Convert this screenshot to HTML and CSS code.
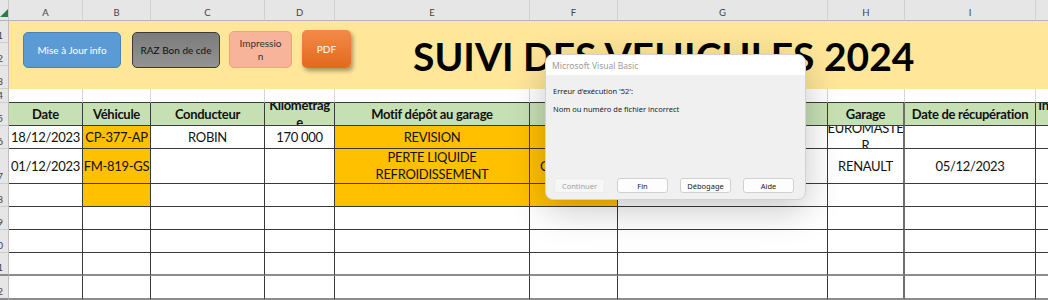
FILE: index.html
```html
<!DOCTYPE html>
<html lang="fr">
<head>
    <meta charset="UTF-8">
    <title>Suivi des véhicules 2024</title>
    <link rel="stylesheet" href="styles.css">
</head>
<body>
<div class="sheet">
    <!-- column letters -->
    <div class="corner"><svg class="tri" width="8" height="8" viewBox="0 0 8 8"><polygon points="8,0 8,8 0,8" fill="#2f7a4a"/></svg></div>
    <div class="col">A</div>
    <div class="col">B</div>
    <div class="col">C</div>
    <div class="col">D</div>
    <div class="col">E</div>
    <div class="col">F</div>
    <div class="col">G</div>
    <div class="col">H</div>
    <div class="col">I</div>
    <div class="col">J</div>

    <!-- rows 1-3 : banner -->
    <div class="rh">1</div>
    <div class="band">
        <div class="btn b-info">Mise à Jour info</div>
        <div class="btn b-raz">RAZ Bon de cde</div>
        <div class="btn b-print">Impressio<br>n</div>
        <div class="btn b-pdf">PDF</div>
        <div class="title">SUIVI DES VEHICULES 2024</div>
    </div>
    <div class="rh">2</div>
    <div class="rh">3</div>

    <!-- row 4 -->
    <div class="rh">4</div>
    <div class="lt"></div><div class="lt"></div><div class="lt"></div><div class="lt"></div><div class="lt"></div>
    <div class="lt"></div><div class="lt"></div><div class="lt"></div><div class="lt"></div><div class="lt"></div>

    <!-- row 5 : headers -->
    <div class="rh">5</div>
    <div class="c h">Date</div>
    <div class="c h">Véhicule</div>
    <div class="c h">Conducteur</div>
    <div class="c h">Kilometrag<br>e</div>
    <div class="c h">Motif dépôt au garage</div>
    <div class="c h">Devis</div>
    <div class="c h">Travaux effectués</div>
    <div class="c h hh">Garage</div>
    <div class="c h">Date de récupération</div>
    <div class="c h">Indisponibilité du<br>véhicule</div>

    <!-- row 6 -->
    <div class="rh">6</div>
    <div class="c">18/12/2023</div>
    <div class="c o">CP-377-AP</div>
    <div class="c">ROBIN</div>
    <div class="c">170 000</div>
    <div class="c o">REVISION</div>
    <div class="c o"></div>
    <div class="c"></div>
    <div class="c hh">EUROMASTE<br>R</div>
    <div class="c"></div>
    <div class="c"></div>

    <!-- row 7 -->
    <div class="rh">7</div>
    <div class="c">01/12/2023</div>
    <div class="c o">FM-819-GS</div>
    <div class="c"></div>
    <div class="c"></div>
    <div class="c o wrap">PERTE LIQUIDE REFROIDISSEMENT</div>
    <div class="c o">CONTROLE</div>
    <div class="c"></div>
    <div class="c hh">RENAULT</div>
    <div class="c">05/12/2023</div>
    <div class="c"></div>

    <!-- row 8 -->
    <div class="rh">8</div>
    <div class="c"></div><div class="c o"></div><div class="c"></div><div class="c"></div><div class="c o"></div>
    <div class="c o"></div><div class="c"></div><div class="c hh"></div><div class="c"></div><div class="c"></div>

    <!-- rows 9-12 -->
    <div class="rh">9</div>
    <div class="c"></div><div class="c"></div><div class="c"></div><div class="c"></div><div class="c"></div>
    <div class="c"></div><div class="c"></div><div class="c hh"></div><div class="c"></div><div class="c"></div>

    <div class="rh">10</div>
    <div class="c"></div><div class="c"></div><div class="c"></div><div class="c"></div><div class="c"></div>
    <div class="c"></div><div class="c"></div><div class="c hh"></div><div class="c"></div><div class="c"></div>

    <div class="rh brk">11</div>
    <div class="c brk"></div><div class="c brk"></div><div class="c brk"></div><div class="c brk"></div><div class="c brk"></div>
    <div class="c brk"></div><div class="c brk"></div><div class="c hh brk"></div><div class="c brk"></div><div class="c brk"></div>

    <div class="rh brk">12</div>
    <div class="c brk"></div><div class="c brk"></div><div class="c brk"></div><div class="c brk"></div><div class="c brk"></div>
    <div class="c brk"></div><div class="c brk"></div><div class="c hh brk"></div><div class="c brk"></div><div class="c brk"></div>

    <!-- VBA error box -->
    <div class="dlg">
        <div class="dlg-title">Microsoft Visual Basic</div>
        <div class="dlg-body">
            <p>Erreur d'exécution '52':</p>
            <p>Nom ou numéro de fichier incorrect</p>
        </div>
        <div class="dlg-btns">
            <div class="dlg-btn off">Continuer</div>
            <div class="dlg-btn">Fin</div>
            <div class="dlg-btn">Débogage</div>
            <div class="dlg-btn">Aide</div>
        </div>
    </div>
</div>
</body>
</html>
```

FILE: styles.css
```css
body {
    margin: 0;
    overflow: hidden;
    background: #fff;
    font-family: Lato, "Liberation Sans", sans-serif;
}
.sheet {
    position: relative;
    display: grid;
    width: 1136px;
    grid-template-columns: 9px 74px 68px 114px 70px 195px 88px 210px 77px 131px 100px;
    grid-template-rows: 21px 22px 23px 23px 14px 23px 23px 35px 23px 23px 23px 23px 24px;
}
.sheet > div {
    box-sizing: border-box;
}
/* column / row headings */
.corner {
    background: #e6e6e6;
    border-right: 1px solid #c8c8c8;
    border-bottom: 1px solid #b5b5b5;
    display: flex;
    align-items: flex-end;
    padding-bottom: 3px;
}
.col {
    display: flex;
    align-items: center;
    justify-content: center;
    padding-top: 5px;
    background: #e6e6e6;
    border-right: 1px solid #d0d0d0;
    border-bottom: 1px solid #b5b5b5;
    font-size: 9.5px;
    color: #444;
}
.rh {
    grid-column: 1;
    display: flex;
    justify-content: flex-end;
    align-items: flex-end;
    overflow: hidden;
    padding: 0 5px 1px 0;
    background: #e6e6e6;
    border-right: 1px solid #bdbdbd;
    border-bottom: 1px solid #cdcdcd;
    font-size: 10px;
    color: #444;
}
/* banner rows 1-3 */
.band {
    grid-column: 2 / -1;
    grid-row: span 3;
    display: flex;
    align-items: flex-start;
    padding: 11px 0 0 14px;
    background: #ffe699;
}
.btn {
    display: flex;
    align-items: center;
    justify-content: center;
    box-sizing: border-box;
    height: 36px;
    border-radius: 5px;
    font-size: 10px;
    line-height: 13px;
    text-align: center;
}
.b-info {
    width: 98px;
    background: #5b9bd5;
    border: 1px solid #4a82b8;
    color: #fff;
}
.b-raz {
    width: 88px;
    margin-left: 11px;
    background: linear-gradient(#7b7b7b, #939393);
    border: 1.5px solid #3a3a3a;
    color: #111;
}
.b-print {
    width: 63px;
    height: 37px;
    margin: -1px 0 0 9px;
    background: #f8b49a;
    border: 1px solid #f3a177;
    color: #333;
}
.b-pdf {
    width: 49px;
    height: 38px;
    margin: -2px 0 0 10px;
    background: linear-gradient(#f38a49, #e3691c);
    box-shadow: 2px 3px 4px rgba(0, 0, 0, 0.35);
    color: #fff;
}
.title {
    margin: 5px 0 0 62px;
    font-size: 39px;
    line-height: 39px;
    font-weight: bold;
    color: #000;
    white-space: nowrap;
}
/* cells */
.lt {
    border-right: 1px solid #d6d6d6;
    border-bottom: 1px solid #3a3a3a;
}
.c {
    display: flex;
    align-items: center;
    justify-content: center;
    overflow: hidden;
    padding: 0 1px;
    border-right: 1px solid #3a3a3a;
    border-bottom: 1px solid #3a3a3a;
    font-size: 13px;
    line-height: 17px;
    letter-spacing: -0.3px;
    white-space: nowrap;
    text-align: center;
    color: #111;
}
.wrap {
    white-space: normal;
}
.h {
    background: #c6e0b4;
    font-weight: bold;
}
.o {
    background: #ffc000;
}
.hh {
    border-right: 2px solid #6e6e6e;
}
.brk {
    border-bottom: 2px solid #8c8c8c;
}
/* error box */
.dlg {
    position: absolute;
    left: 545px;
    top: 54px;
    width: 261px;
    height: 146px;
    box-sizing: border-box;
    display: flex;
    flex-direction: column;
    overflow: hidden;
    background: #f0f0f0;
    border: 1px solid #d2d2d2;
    border-radius: 8px;
    box-shadow: 0 10px 36px rgba(0, 0, 0, 0.22);
    font-family: "Noto Sans", Lato, sans-serif;
    color: #1a1a1a;
}
.dlg-title {
    height: 20px;
    display: flex;
    align-items: center;
    padding-left: 6px;
    background: #fff;
    font-size: 8.5px;
    color: #9b9b9b;
}
.dlg-body {
    flex: 1;
    padding: 12px 7px 0;
    font-size: 7.5px;
}
.dlg-body p {
    margin: 0 0 9px;
    line-height: 9px;
}
.dlg-btns {
    display: flex;
    gap: 12px;
    padding: 0 0 6px 8px;
}
.dlg-btn {
    width: 51px;
    height: 15px;
    box-sizing: border-box;
    display: flex;
    align-items: center;
    justify-content: center;
    background: #fdfdfd;
    border: 1px solid #d0d0d0;
    border-radius: 3px;
    font-size: 7.5px;
}
.dlg-btn.off {
    background: #f6f6f6;
    border-color: #ebebeb;
    color: #a0a0a0;
}
```
